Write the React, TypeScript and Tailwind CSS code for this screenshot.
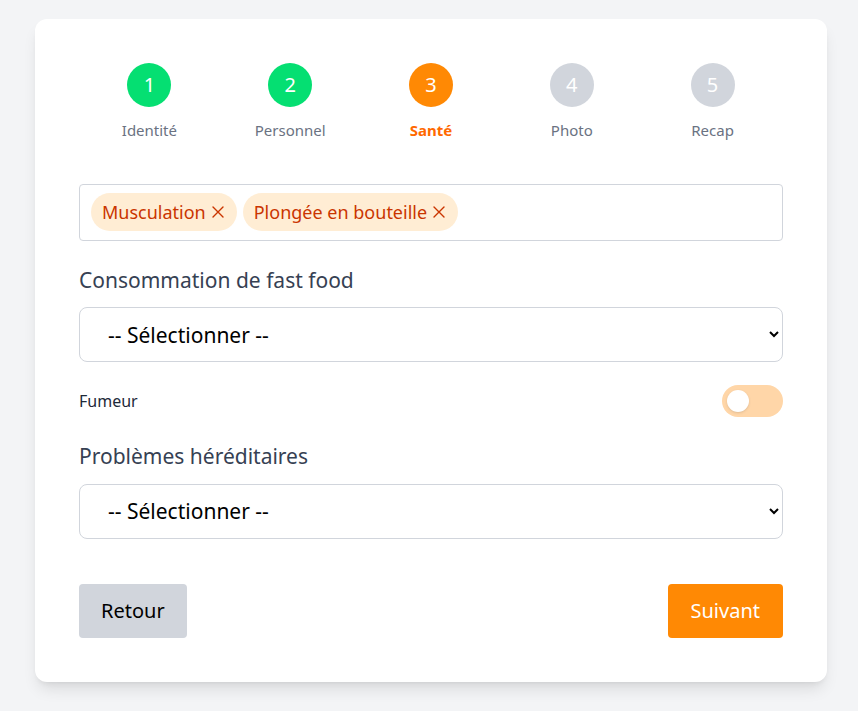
import React, { useState } from "react";

const steps = [
  { n: 1, label: "Identité", state: "done" },
  { n: 2, label: "Personnel", state: "done" },
  { n: 3, label: "Santé", state: "current" },
  { n: 4, label: "Photo", state: "todo" },
  { n: 5, label: "Recap", state: "todo" },
];

const XIcon = () => (
  <svg viewBox="0 0 16 16" className="ml-1 h-4 w-4" fill="none" stroke="currentColor" strokeWidth="1.4" strokeLinecap="round">
    <path d="M3 3l10 10M13 3L3 13" />
  </svg>
);

export default function App() {
  const [tags] = useState(["Musculation", "Plongée en bouteille"]);
  const [smoker, setSmoker] = useState(false);

  return (
    <div className="min-h-[711px] bg-[#f3f4f6] pt-[19px]" style={{ fontFamily: '"Noto Sans", sans-serif' }}>
      <div className="mx-[35px] w-[792px] rounded-xl bg-white p-[44px] shadow-lg">
        <div className="grid grid-cols-5">
          {steps.map((s) => (
            <div key={s.n} className="flex flex-col items-center">
              <div
                className={
                  "flex h-11 w-11 items-center justify-center rounded-full text-xl text-white " +
                  (s.state === "done" ? "bg-[#05df72]" : s.state === "current" ? "bg-[#ff8904]" : "bg-[#d1d5dc]")
                }
              >
                {s.n}
              </div>
              <span
                className={
                  "mt-3 text-[15px] " +
                  (s.state === "current" ? "font-bold text-[#ff6900]" : "text-[#6a7282]")
                }
              >
                {s.label}
              </span>
            </div>
          ))}
        </div>

        <div className="mt-[42px] flex h-[57px] items-center gap-[6px] rounded border border-[#d1d5dc] px-[11px]">
          {tags.map((t) => (
            <span key={t} className="flex h-[38px] items-center rounded-full bg-[#ffedd4] px-[11px] text-[18px] text-[#ca3500]">
              {t}
              <XIcon />
            </span>
          ))}
        </div>

        <label className="mt-[24px] block text-[21px] text-[#364153]">Consommation de fast food</label>
        <select className="mt-[11px] block h-[55px] w-full rounded-lg border border-[#d1d5dc] bg-white px-6 text-[21px] text-black">
          <option>-- Sélectionner --</option>
        </select>

        <div className="mt-[23px] flex items-center justify-between">
          <span className="text-[16px] text-[#1e2939]">Fumeur</span>
          <button
            onClick={() => setSmoker(!smoker)}
            className={"flex h-8 w-[61px] items-center rounded-full px-[5px] " + (smoker ? "justify-end bg-[#ff8904]" : "bg-[#ffd6a8]")}
          >
            <span className="h-[22px] w-[22px] rounded-full bg-white shadow" />
          </button>
        </div>

        <label className="mt-[24px] block text-[21px] text-[#364153]">Problèmes héréditaires</label>
        <select className="mt-[11px] block h-[55px] w-full rounded-lg border border-[#d1d5dc] bg-white px-6 text-[21px] text-black">
          <option>-- Sélectionner --</option>
        </select>

        <div className="mt-[45px] flex items-center justify-between">
          <button className="h-[54px] rounded bg-[#d1d5dc] px-[22px] text-[20px] text-black">Retour</button>
          <button className="h-[54px] rounded bg-[#ff8904] px-[23px] text-[20px] text-white">Suivant</button>
        </div>
      </div>
    </div>
  );
}
